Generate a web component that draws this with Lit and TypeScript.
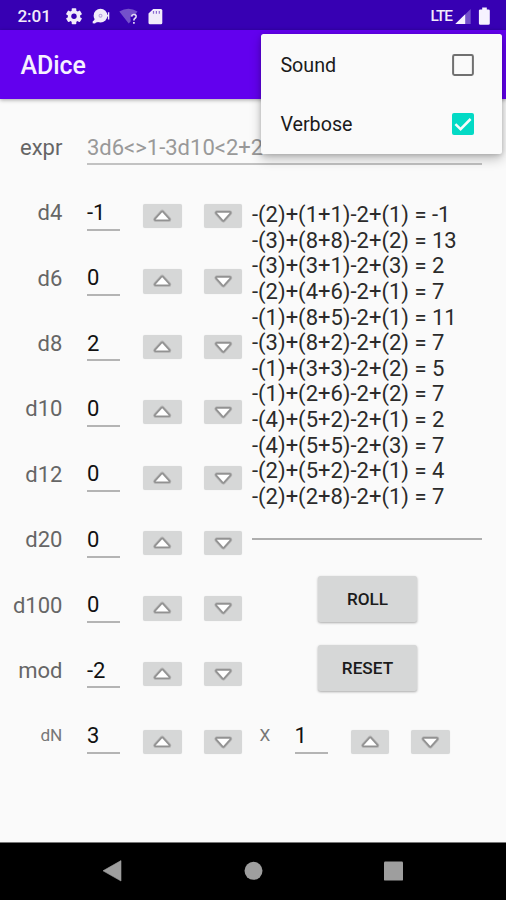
import { LitElement, html, css, svg } from "lit";
import { customElement, property } from "lit/decorators.js";

@customElement("arrow-button")
class ArrowButton extends LitElement {
  @property({ type: Boolean }) down = false;
  static styles = css`
    :host { display: block; width: 38.6px; height: 24.2px; flex: none; }
    .face { display: block; width: 100%; height: 100%; padding: 0; border: 0; border-radius: 2px;
      background: #d6d7d7; box-shadow: 0 0 1px #dedede; }
    svg { display: block; width: 38.6px; height: 24.2px; }
    .edge { fill: none; stroke-linejoin: round; }
    .soft { stroke: #b9b9b9; stroke-width: 5; }
    .hard { stroke: #929292; stroke-width: 3.4; }
    .fill { fill: #fff; }
  `;
  render() {
    const d = this.down ? "M12.8 8.8H25.8L19.3 16Z" : "M12.6 15.4H25.8L19.2 8.2Z";
    return html`<button class="face" aria-label=${this.down ? "decrease" : "increase"}>
      <svg viewBox="0 0 38.6 24.2">
        <path class="edge soft" d=${d} /><path class="edge hard" d=${d} /><path class="fill" d=${d} />
      </svg></button>`;
  }
}

@customElement("app-root")
class AppRoot extends LitElement {
  static styles = css`
    :host { display: flex; flex-direction: column; position: relative; width: 506px; height: 900px;
      overflow: hidden; background: #fafafa; font-family: Roboto, sans-serif; font-size: 22px; color: #151515; }
    .status { height: 30px; flex: none; box-sizing: border-box; background: #3700b3; color: #f1ecfa;
      display: flex; align-items: center; padding: 1px 0 0 17.4px; font-size: 17.2px; font-weight: 500; }
    .clock { width: 48.6px; letter-spacing: -0.1px; }
    .status svg { display: block; flex: none; }
    .left { display: flex; flex: 1; }
    .lte { font-size: 15.4px; font-weight: 500; letter-spacing: -1px; margin-right: 2px; width: 22.6px; }
    .right { display: flex; align-items: center; width: 75.5px; }
    .bar { height: 69px; flex: none; box-sizing: border-box; background: #6200ee; color: #f6f0ff;
      font-size: 24.9px; font-weight: 500; line-height: 28px; padding: 22px 0 0 20.4px;
      box-shadow: 0 1px 4px rgba(0, 0, 0, 0.35); }
    .content { flex: 1; padding: 34.5px 24.5px 0 0; display: flex; flex-direction: column; }
    .expr { display: flex; height: 65.5px; flex: none; line-height: 26px; }
    .label { width: 62.4px; flex: none; text-align: right; color: #666; margin-right: 24.6px; padding-top: 1.2px; line-height: 26px; }
    .expr .label { padding-top: 1.5px; }
    .hint { flex: 1; color: #999; height: 28.2px; padding-top: 1px; line-height: 26px; border-bottom: 2px solid #c2c2c2; }
    .body { display: grid; grid-template-columns: 252px 1fr; height: 523.2px; flex: none; }
    .row { display: flex; height: 65.4px; line-height: 26px; }
    .field { width: 33px; height: 28.8px; padding-top: 0.8px; flex: none; border-bottom: 2px solid #b4b4b4; margin-right: 23px; line-height: 26px; color: #111; }
    .row arrow-button { margin: 5.1px 22px 0 0; }
    .results { display: flex; flex-direction: column; align-items: center; }
    .log { align-self: stretch; height: 336.4px; padding-top: 3px; line-height: 25.64px; border-bottom: 2px solid #aeaeae; color: #2b2b2b; }
    .line { white-space: pre; }
    .btn { width: 98.6px; height: 46px; flex: none; border: 0; padding: 0; border-radius: 2.5px; background: #d6d7d7;
      font: 500 17.2px Roboto, sans-serif; color: #1b1b1b; box-shadow: 0 1px 2.5px rgba(0, 0, 0, 0.32); margin: 36px 0 0 1.5px; }
    .btn + .btn { margin-top: 23px; }
    .last arrow-button { margin-top: 7.8px; }
    .last .label, .times { font-size: 17.2px; padding-top: 0; }
    .last .label { color: #777; }
    .times { width: 35px; margin-left: -4.6px; color: #777; }
    .nav { height: 58px; flex: none; background: #000; border-top: 1px solid #777; box-sizing: border-box; }
    .nav svg { display: block; }
    .menu { position: absolute; left: 260.5px; top: 34.4px; width: 241.5px; height: 119.2px; box-sizing: border-box;
      background: #fafafa; border-radius: 2.5px; padding: 1px 0; font-size: 19.7px; color: #1b1b1b;
      box-shadow: 0 5px 12px rgba(0, 0, 0, 0.24), 0 1px 5px rgba(0, 0, 0, 0.18); }
    .item { height: 59px; display: flex; align-items: center; justify-content: space-between; padding: 0 28.5px 0 19.9px; }
    .item span { padding-top: 2px; }
    .box { display: block; }
  `;

  private rows: [string, string][] = [["d4", "-1"], ["d6", "0"], ["d8", "2"], ["d10", "0"], ["d12", "0"], ["d20", "0"], ["d100", "0"], ["mod", "-2"]];
  private log = [
    "-(2)+(1+1)-2+(1) = -1", "-(3)+(8+8)-2+(2) = 13", "-(3)+(3+1)-2+(3) = 2", "-(2)+(4+6)-2+(1) = 7",
    "-(1)+(8+5)-2+(1) = 11", "-(3)+(8+2)-2+(2) = 7", "-(1)+(3+3)-2+(2) = 5", "-(1)+(2+6)-2+(2) = 7",
    "-(4)+(5+2)-2+(1) = 2", "-(4)+(5+5)-2+(3) = 7", "-(2)+(5+2)-2+(1) = 4", "-(2)+(2+8)-2+(1) = 7",
  ];

  private stepper(value: string) {
    return html`<div class="field">${value}</div><arrow-button></arrow-button><arrow-button down></arrow-button>`;
  }

  private statusIcons() {
    const teeth = [0, 60, 120].map((a) => svg`<rect x="-2.3" y="-8" width="4.6" height="16" rx=".8" transform="rotate(${a})" />`);
    return html`<svg width="100" height="20" viewBox="66 5 100 20" fill="#f1ecfa">
      <g transform="translate(74 15.3)">${teeth}<circle r="6.1" /><circle r="2.7" fill="#3700b3" /></g>
      <circle cx="100.5" cy="14.7" r="6.9" /><path d="M92.5 22.2L95 17.5 98.5 21Z" />
      <circle cx="94.2" cy="21" r="1.6" /><circle cx="100.5" cy="14.7" r="2" fill="#b7a3df" />
      <circle cx="100.5" cy="14.7" r=".9" /><path d="M106 13.7H107.9V11.2H109.3V18.4H107.9V15.6H106Z" />
      <path d="M119.3 10.6Q128.5 4.9 137.5 10.6L135.7 13Q131 12.6 130.4 16.5L130.8 20.2 128.7 22.6Z" fill="#7450cb" />
      <path d="M131.6 15.6Q132 13.4 134.1 13.5 136.5 13.8 136 16 135.6 17 134.4 17.8 133.9 18.3 133.9 19.4M133.9 21V22.8" fill="none" stroke="#e2daf5" stroke-width="1.7" />
      <path d="M153.2 7.9H160.8Q162.3 7.9 162.3 9.4V21.8Q162.3 23.3 160.8 23.3H150Q148.5 23.3 148.5 21.8V12.6Z" />
      <path d="M153.5 10V12.7M156.4 10V12.7M159.3 10V12.7" stroke="#8a6ad0" stroke-width="1.2" />
    </svg>`;
  }

  render() {
    return html`
      <div class="status">
        <div class="left"><span class="clock">2:01</span>${this.statusIcons()}</div>
        <div class="right"><span class="lte">LTE</span>
          <svg width="38" height="20" viewBox="455 5 38 20" fill="#f6f2ff">
            <path d="M455.3 23L470.7 8V23Z" fill="#7450cb" /><path d="M455.3 23L465.2 13.3V23Z" />
            <path d="M482.2 6.6H486.8V8.4H488.3Q489.8 8.4 489.8 9.6V22.6Q489.8 23.8 488.3 23.8H480.4Q478.9 23.8 478.9 22.6V9.6Q478.9 8.4 480.4 8.4H482.2Z" />
          </svg>
        </div>
      </div>
      <div class="bar">ADice</div>
      <div class="content">
        <div class="expr"><div class="label">expr</div><div class="hint">3d6&lt;&gt;1-3d10&lt;2+2</div></div>
        <div class="body">
          <div class="dice">${this.rows.map(([n, v]) => html`<div class="row"><div class="label">${n}</div>${this.stepper(v)}</div>`)}</div>
          <div class="results">
            <div class="log">${this.log.map((l) => html`<div class="line">${l}</div>`)}</div>
            <button class="btn">ROLL</button><button class="btn">RESET</button>
          </div>
        </div>
        <div class="row last"><div class="label">dN</div>${this.stepper("3")}<div class="times">X</div>${this.stepper("1")}</div>
      </div>
      <div class="nav"><svg width="506" height="57" viewBox="0 843 506 57" fill="#9e9e9e">
        <path d="M103 870.8L121 860.6V881Z" stroke="#9e9e9e" stroke-width=".6" stroke-linejoin="round" />
        <circle cx="253.5" cy="870.8" r="9" /><rect x="384" y="861.6" width="19" height="19" rx="1.2" />
      </svg></div>
      <div class="menu">
        <div class="item"><span>Sound</span><svg class="box" width="22" height="22" viewBox="0 0 22 22"><rect x="1.1" y="1.1" width="19.8" height="19.8" rx="1.4" fill="none" stroke="#707070" stroke-width="2" /></svg></div>
        <div class="item"><span>Verbose</span><svg class="box" width="22" height="22" viewBox="0 0 22 22"><rect width="22" height="22" rx="2" fill="#03dac5" /><path d="M3.4 11.2L8.6 16.2 18.6 6" fill="none" stroke="#fafafa" stroke-width="2.5" /></svg></div>
      </div>`;
  }
}
